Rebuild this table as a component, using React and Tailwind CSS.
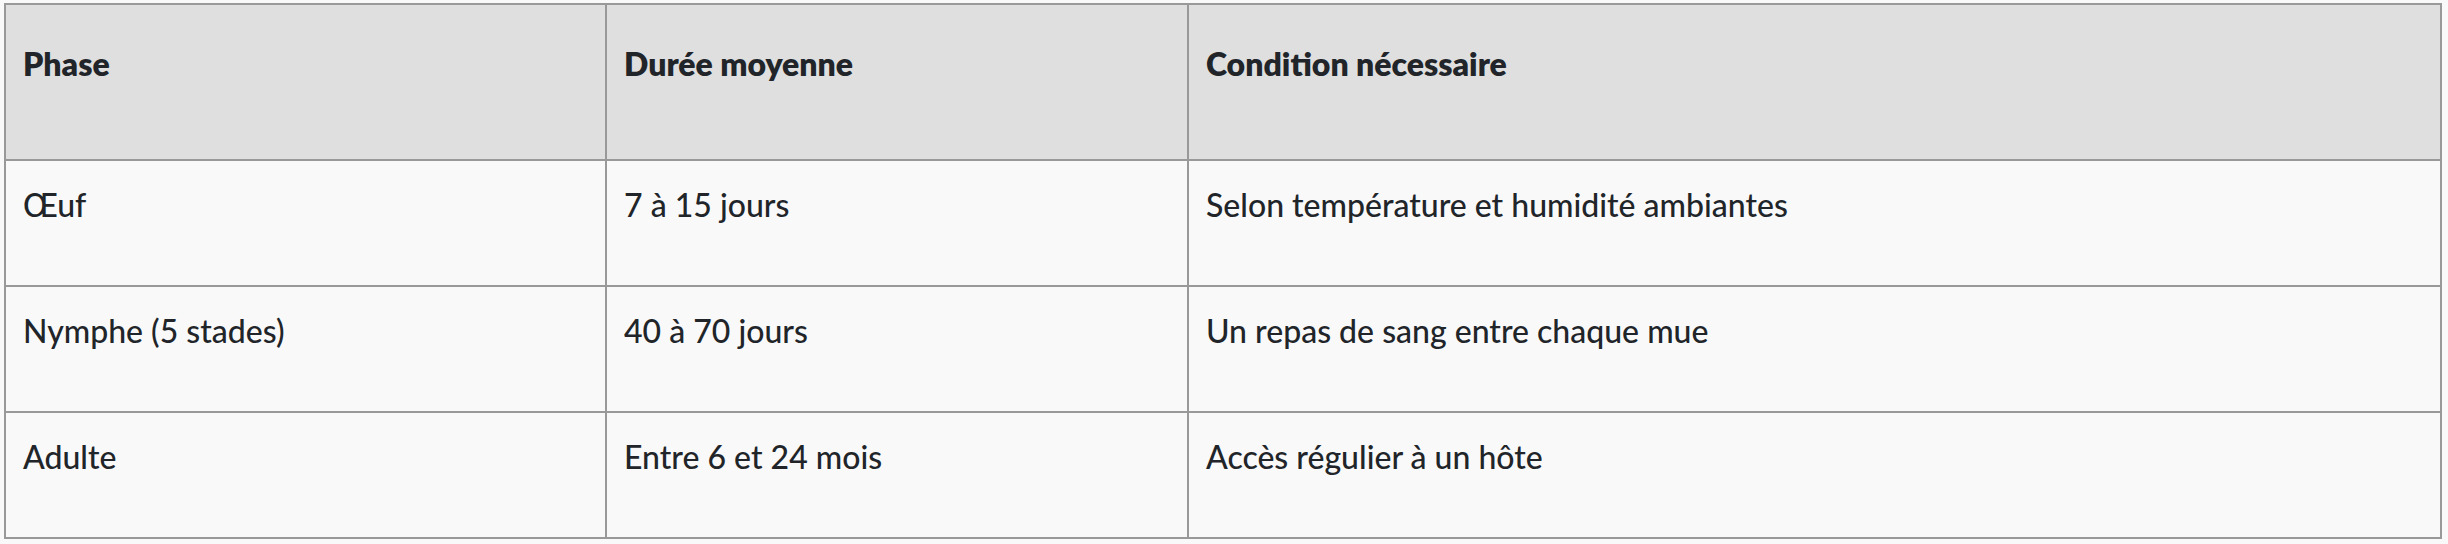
import React from "react";

const rows = [
  ["Œuf", "7 à 15 jours", "Selon température et humidité ambiantes"],
  ["Nymphe (5 stades)", "40 à 70 jours", "Un repas de sang entre chaque mue"],
  ["Adulte", "Entre 6 et 24 mois", "Accès régulier à un hôte"],
];

export default function App() {
  return (
    <div
      className="bg-[#f9f9f9] pl-[4px] pr-[6px] pt-[3px] pb-[5px] text-[#212529]"
      style={{ fontFamily: "Lato, 'Noto Sans', sans-serif" }}
    >
      <table className="w-full table-fixed border-collapse border-2 border-[#999999] text-[32px] leading-[45px]">
        <colgroup>
          <col className="w-[601px]" />
          <col className="w-[582px]" />
          <col />
        </colgroup>
        <thead>
          <tr className="h-[156px] bg-[#dfdfdf]">
            <th className="border-2 border-[#999999] px-[17px] pt-[36px] pb-0 text-left align-top font-extrabold">
              Phase
            </th>
            <th className="border-2 border-[#999999] px-[17px] pt-[36px] pb-0 text-left align-top font-extrabold">
              Durée moyenne
            </th>
            <th className="border-2 border-[#999999] px-[17px] pt-[36px] pb-0 text-left align-top font-extrabold">
              Condition nécessaire
            </th>
          </tr>
        </thead>
        <tbody>
          {rows.map((r, i) => (
            <tr key={i} className="h-[126px] bg-[#f9f9f9]">
              {r.map((c, j) => (
                <td
                  key={j}
                  className="border-2 border-[#999999] px-[17px] pt-[21px] pb-0 text-left align-top font-medium"
                >
                  {c}
                </td>
              ))}
            </tr>
          ))}
        </tbody>
      </table>
    </div>
  );
}
